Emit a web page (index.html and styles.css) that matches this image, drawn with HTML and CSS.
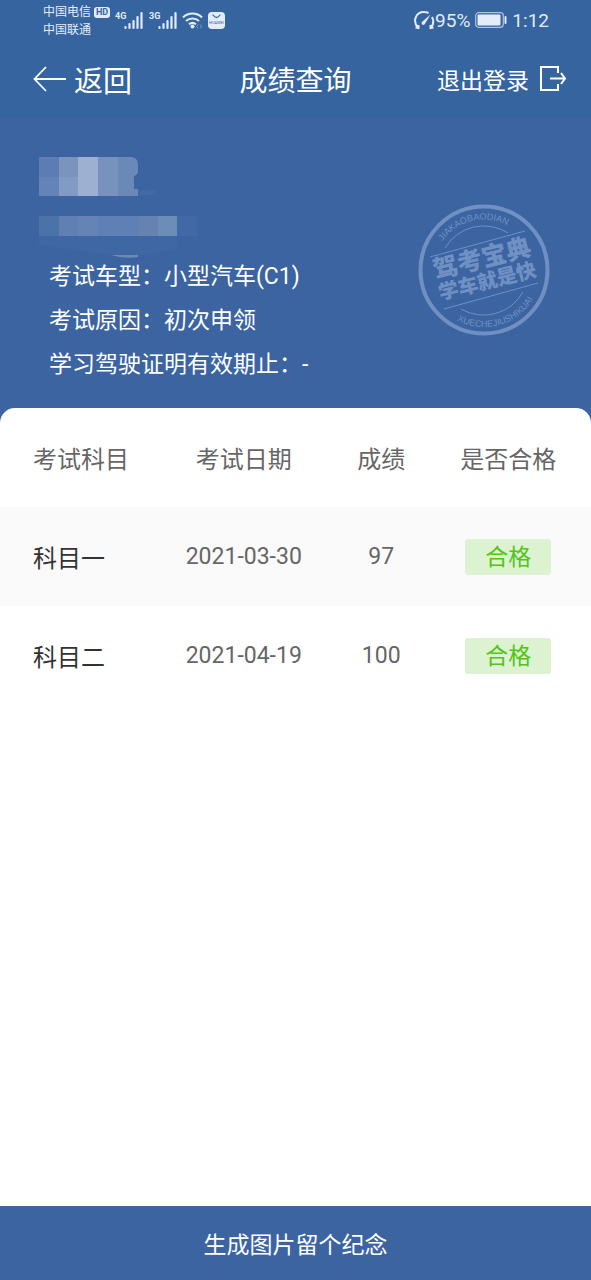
FILE: index.html
```
<!DOCTYPE html>
<html lang="zh-CN">
<head>
    <meta charset="UTF-8" />
    <meta name="viewport" content="width=device-width, initial-scale=1" />
    <title>成绩查询</title>
    <link rel="stylesheet" href="styles.css">
</head>
<body>
    <div class="status-bar">
        <div class="carriers">
            <div class="carrier">中国电信<span class="hd">HD</span></div>
            <div class="carrier">中国联通</div>
        </div>
        <div class="signals">
            <svg class="signal" width="30" height="22" viewBox="0 0 30 22">
                <text class="net" x="1" y="10">4G</text>
                <path d="M11.5 19v-1M15.5 19v-4M19.5 19v-7M23.5 19V8M27.5 19V4" stroke="currentColor" stroke-width="2.2" stroke-linecap="round" />
            </svg>
            <svg class="signal" width="30" height="22" viewBox="0 0 30 22">
                <text class="net" x="1" y="10">3G</text>
                <path d="M11.5 19v-1M15.5 19v-4M19.5 19v-7M23.5 19V8M27.5 19V4" stroke="currentColor" stroke-width="2.2" stroke-linecap="round" />
            </svg>
            <svg width="22" height="18" viewBox="0 0 22 18" fill="none" stroke="currentColor" stroke-width="2">
                <path d="M1 6.5a13.5 13.5 0 0 1 19 0M4 10a9.5 9.5 0 0 1 13 0M7 13.3a5.5 5.5 0 0 1 7 0" />
                <circle cx="10.5" cy="15.5" r="2" fill="currentColor" stroke="none" />
                <path d="M16 13.5l-1.5 2 1.5 2M18 13.5l1.5 2-1.5 2" stroke-width="1" opacity=".45" />
            </svg>
            <svg width="17" height="17" viewBox="0 0 17 17">
                <rect width="17" height="17" rx="4" fill="#e3ecf8" />
                <path d="M5 3q3.5 5 7 0" fill="none" stroke="#35649f" stroke-width="1.3" stroke-linecap="round" />
                <text x="8.5" y="11.5" font-size="4" text-anchor="middle" fill="#35649f">HUAWEI</text>
            </svg>
        </div>
        <div class="system">
            <svg width="22" height="20" viewBox="0 0 22 20" fill="none" stroke="currentColor" stroke-width="2">
                <path d="M5 17.5C-1 11 3 1.500 11.500 2q2 0 4 1M19 7q3 5.500-1 10.500M2.500 17.500l3 .5V15M20.500 17.500l-3 .5V15" />
                <path d="M17.5 4.500L9.500 11.500a1.800 1.800 0 1 0 2.500 2.300z" fill="currentColor" stroke="none" />
            </svg>
            <span>95%</span>
            <svg class="battery" width="32" height="16" viewBox="0 0 32 16">
                <rect x=".7" y=".7" width="27.6" height="14.6" rx="3" fill="none" stroke="currentColor" stroke-width="1.2" opacity=".7" />
                <rect x="2.5" y="2.5" width="23" height="11" rx="1" fill="currentColor" />
                <rect x="29.5" y="4" width="2" height="8" rx="1" fill="currentColor" />
            </svg>
            <span>1:12</span>
        </div>
    </div>

    <header class="nav-bar">
        <button class="nav-btn back" type="button">
            <svg width="33" height="26" viewBox="0 0 33 26" fill="none" stroke="currentColor" stroke-width="1.8">
                <path d="M33 13H1.5M13 1L1.5 13 13 25" />
            </svg>
            返回
        </button>
        <h1>成绩查询</h1>
        <button class="nav-btn logout" type="button">
            退出登录
            <svg width="28" height="26" viewBox="0 0 28 26" fill="none" stroke="currentColor" stroke-width="2">
                <path d="M19 7V1H2v23h17v-6M11 12.500h15M22 7l4 5.500-4 5.500" />
            </svg>
        </button>
    </header>

    <section class="profile">
        <div class="profile-info">
            <svg class="masked" width="160" height="104" viewBox="0 0 160 104" aria-hidden="true">
                <path d="M0 1h20v20H0z" fill="#5b7db4" />
                <path d="M0 21h20v19H0z" fill="#6483b8" />
                <path d="M20 1h19v20H20z" fill="#7a94be" />
                <path d="M20 21h19v19H20z" fill="#829bc4" />
                <path d="M39 1h20v39H39z" fill="#9db0d1" />
                <path d="M59 1h20v39H59z" fill="#7892bd" />
                <path d="M79 1h14q6 1 6 8v6q0 4-4 5v13h4v7H79z" fill="#6a89b7" />
                <path d="M99 34h18v5H99z" fill="#4069a6" />
                <path d="M0 60h20v20H0z" fill="#4c72aa" />
                <path d="M20 60h19v20H20z" fill="#6080b3" />
                <path d="M39 60h20v20H39z" fill="#6583b5" />
                <path d="M59 60h40v20H59z" fill="#5f80b4" />
                <path d="M99 60h20v20H99z" fill="#6582b1" />
                <path d="M119 60h19v20h-19z" fill="#6c8db8" />
                <path d="M138 60h20v20h-20z" fill="#4069a5" />
                <path d="M0 80h138v13l-39 7-27-1L0 89z" fill="#3e67a4" />
                <path d="M72 99h27v2q-14 2-27-2z" fill="#6a8bb9" />
            </svg>
            <p>考试车型：小型汽车(C1)</p>
            <p>考试原因：初次申领</p>
            <p>学习驾驶证明有效期止：-</p>
        </div>
        <svg class="stamp" width="132" height="132" viewBox="0 0 132 132">
            <defs>
                <path id="arc-top" d="M15.5 66a50.5 50.5 0 0 1 101 0" />
                <path id="arc-bottom" d="M9 66a57 57 0 0 0 114 0" />
            </defs>
            <g fill="none" stroke="currentColor">
                <circle cx="66" cy="66" r="63.5" stroke-width="4" />
                <path d="M12 53L107 27M26 105l94-26M27 44a45 45 0 0 1 63-15M43 105a45 45 0 0 0 62-17" />
            </g>
            <g fill="currentColor" font-size="9">
                <text text-anchor="middle"><textPath href="#arc-top" startOffset="67">JIAKAOBAODIAN</textPath></text>
                <text text-anchor="middle"><textPath href="#arc-bottom" startOffset="105">XUECHEJIUSHIKUAI</textPath></text>
            </g>
            <g class="stamp-title" fill="currentColor" text-anchor="middle">
                <text transform="translate(66 63) rotate(-14)" font-size="25">驾考宝典</text>
                <text transform="translate(71 84) rotate(-14)" font-size="20">学车就是快</text>
            </g>
        </svg>
    </section>

    <main class="results">
        <table>
            <thead>
                <tr>
                    <th class="subject">考试科目</th>
                    <th class="date">考试日期</th>
                    <th class="score">成绩</th>
                    <th class="passed">是否合格</th>
                </tr>
            </thead>
            <tbody>
                <tr>
                    <td class="subject">科目一</td>
                    <td class="date">2021-03-30</td>
                    <td class="score">97</td>
                    <td class="passed"><span class="badge">合格</span></td>
                </tr>
                <tr>
                    <td class="subject">科目二</td>
                    <td class="date">2021-04-19</td>
                    <td class="score">100</td>
                    <td class="passed"><span class="badge">合格</span></td>
                </tr>
            </tbody>
        </table>
    </main>

    <button class="save-btn" type="button">生成图片留个纪念</button>
</body>
</html>
```
FILE: styles.css
```
* {
    margin: 0;
    padding: 0;
    box-sizing: border-box;
}
body {
    display: flex;
    flex-direction: column;
    min-height: 100vh;
    background: #fff;
    color: #666;
    font-family: Roboto, "Noto Sans CJK SC", sans-serif;
}
button {
    border: 0;
    background: none;
    color: inherit;
    font: inherit;
    cursor: pointer;
}
svg { display: block; flex: none; }

.status-bar {
    display: flex;
    align-items: center;
    height: 40px;
    padding: 0 42px 0 43px;
    background: #35649f;
    color: #e3ecf8;
}
.carriers { padding-top: 2px; font-size: 12px; line-height: 18px; }
.carrier { display: flex; align-items: center; gap: 3px; }
.hd {
    padding: 0 2px;
    border-radius: 3px;
    background: #e3ecf8;
    color: #35649f;
    font-size: 9px;
    font-weight: 700;
    line-height: 11px;
}
.signals { display: flex; align-items: center; gap: 4px; margin-left: 4px; }
.net { fill: currentColor; font-size: 9px; font-weight: 700; }
.system { display: flex; align-items: center; margin-left: auto; font-size: 19px; }
.battery { margin: 0 5px; }

.nav-bar {
    display: grid;
    grid-template-columns: 1fr auto 1fr;
    align-items: center;
    height: 78px;
    padding: 0 24px;
    background: #35649f;
    color: #fff;
}
.nav-bar h1 { font-size: 28px; font-weight: 400; }
.nav-btn { display: flex; align-items: center; }
.back { gap: 8px; padding-left: 9px; font-size: 29px; }
.logout { gap: 10px; justify-self: end; font-size: 23px; }

.profile {
    display: flex;
    justify-content: space-between;
    align-items: center;
    padding: 38px 41px 36px 39px;
    background: #3b64a1;
    color: #fff;
}
.profile-info { font-size: 23px; line-height: 44px; }
.profile-info p { padding-left: 10px; }
/* hidden name and ID number */
.masked { margin-bottom: -5px; }
.stamp { margin-bottom: 4px; color: #7090c4; }
.stamp text { font-family: "Liberation Sans", sans-serif; }
.stamp .stamp-title text { font-family: "Noto Sans CJK SC", sans-serif; font-weight: 900; }

.results {
    flex: 1;
    margin-top: -15px;
    border-radius: 15px 15px 0 0;
    background: #fff;
}
table { width: 100%; border-collapse: collapse; table-layout: fixed; }
th, td { height: 99px; text-align: center; }
th { font-size: 24px; font-weight: 400; }
td { font-size: 23px; }
tbody tr:nth-child(odd) { background: #fafafa; }
.subject { width: 28%; padding-left: 33px; text-align: left; }
.date { width: 27%; padding-right: 3px; }
.score { width: 19%; }
.passed { width: 26%; padding-right: 12px; }
td.subject { color: #333; font-size: 24px; }
.badge {
    display: inline-block;
    padding: 2px 20px 0;
    border-radius: 3px;
    background: #dcf2d0;
    color: #52c41a;
    line-height: 34px;
}

.save-btn {
    height: 74px;
    background: #3b64a1;
    color: #fff;
    font-size: 23px;
}
```
